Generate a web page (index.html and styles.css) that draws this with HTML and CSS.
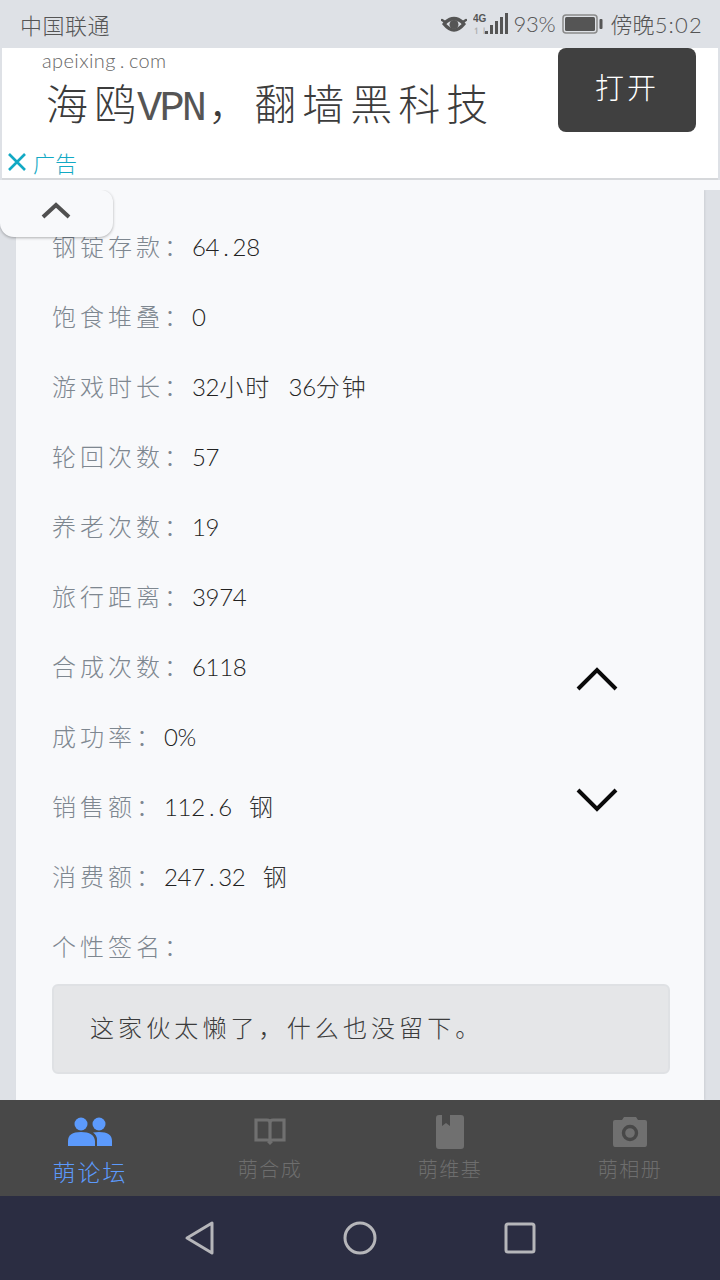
FILE: index.html
```html
<!DOCTYPE html>
<html lang="zh-CN">
<head>
<meta charset="utf-8">
<title>个人资料</title>
<link rel="stylesheet" href="styles.css">
</head>
<body>
<div class="page">
  <header class="status">
    <span class="carrier">中国联通</span>
    <div class="status-right">
      <svg class="eye" viewBox="0 0 26 20" width="26" height="20"><path d="M1 6 L4 8 Q13 0 22 8 L25 6 M4 8 Q3 9 2.500 10 Q13 23 23.500 10 Q23 9 22 8" fill="none" stroke="#555" stroke-width="2.400" stroke-linecap="round"/><path d="M4 10 Q13 1 22 10 Q13 21 4 10Z" fill="none" stroke="#555" stroke-width="2"/><circle cx="13" cy="10.500" r="4.500" fill="#555"/></svg>
      <svg class="signal" viewBox="0 0 36 24" width="36" height="24"><text x="0" y="10" class="sig-4g">4G</text><text x="0" y="22" class="sig-arrows">↿⇂</text><rect x="12" y="19" width="3" height="3" fill="#555"/><rect x="17" y="13" width="3" height="9" fill="#555"/><rect x="22" y="9" width="3" height="13" fill="#555"/><rect x="27" y="5" width="3" height="17" fill="#555"/><rect x="32" y="1" width="3" height="21" fill="#555"/></svg>
      <span class="pct">93%</span>
      <svg class="battery" viewBox="0 0 41 20" width="41" height="20"><rect x="1" y="1" width="34" height="18" rx="3" fill="none" stroke="#8a8a8a" stroke-width="1.500"/><rect x="3" y="3" width="30" height="14" rx="1.500" fill="#555"/><rect x="37.500" y="5" width="3" height="10" rx="1" fill="#555"/></svg>
      <span class="clock">傍晚<span class="clock-num">5:02</span></span>
    </div>
  </header>

  <section class="ad">
    <div class="ad-main">
      <div class="ad-site">apeixing<span class="ad-dot">.</span>com</div>
      <div class="ad-title">海鸥<span class="ad-latin">VPN</span><span class="ad-comma">，</span>翻墙黑科技</div>
    </div>
    <div class="ad-btn">打开</div>
    <div class="ad-mark">
      <svg viewBox="0 0 20 20" width="20" height="20"><path d="M2 2 L18 18 M18 2 L2 18" stroke="#12a9c4" stroke-width="2.600" fill="none"/></svg>
      <span>广告</span>
    </div>
  </section>
  <div class="ad-gap"></div>

  <main class="content">
    <div class="collapse">
      <svg viewBox="0 0 32 20" width="32" height="20"><path d="M3 17 L16 5 L29 17" fill="none" stroke="#505050" stroke-width="4"/></svg>
    </div>
    <div class="card">
      <div class="row"><span class="k">钢锭存款：</span><span class="v"><span class="n">64<span class="dot">.</span>28</span></span></div>
      <div class="row"><span class="k">饱食堆叠：</span><span class="v"><span class="n">0</span></span></div>
      <div class="row"><span class="k">游戏时长：</span><span class="v"><span class="n">32</span>小时 <span class="n">36</span>分钟</span></div>
      <div class="row"><span class="k">轮回次数：</span><span class="v"><span class="n">57</span></span></div>
      <div class="row"><span class="k">养老次数：</span><span class="v"><span class="n">19</span></span></div>
      <div class="row"><span class="k">旅行距离：</span><span class="v"><span class="n">3974</span></span></div>
      <div class="row"><span class="k">合成次数：</span><span class="v"><span class="n">6118</span></span></div>
      <div class="row"><span class="k">成功率：</span><span class="v"><span class="n">0%</span></span></div>
      <div class="row"><span class="k">销售额：</span><span class="v"><span class="n">112<span class="dot">.</span>6</span> 钢</span></div>
      <div class="row"><span class="k">消费额：</span><span class="v"><span class="n">247<span class="dot">.</span>32</span> 钢</span></div>
      <div class="row"><span class="k">个性签名：</span></div>
      <div class="sig">这家伙太懒了，什么也没留下。</div>
    </div>
    <svg class="scroll scroll-up" viewBox="0 0 44 26" width="44" height="26"><path d="M3 22 L22 3 L41 22" fill="none" stroke="#0a0a0a" stroke-width="4"/></svg>
    <svg class="scroll scroll-down" viewBox="0 0 44 26" width="44" height="26"><path d="M3 4 L22 23 L41 4" fill="none" stroke="#0a0a0a" stroke-width="4"/></svg>
  </main>

  <nav class="tabs">
    <div class="tab active">
      <svg viewBox="0 0 46 30" width="46" height="30"><circle cx="14" cy="7" r="6.500" fill="#5c9afc"/><circle cx="32" cy="7" r="6.500" fill="#5c9afc"/><path d="M1 29 V24 Q1 15 14 15 Q27 15 28 24 V29Z" fill="#5c9afc"/><path d="M26 15.500 Q29 15 32 15 Q45 15 45 24 V29 H30 V23 Q30 18 26 15.500Z" fill="#5c9afc"/></svg>
      <span>萌论坛</span>
    </div>
    <div class="tab">
      <svg viewBox="0 0 32 30" width="32" height="30"><path d="M2 3 H13 Q16 3 16 6 V25 Q16 23 13 23 H2Z M30 3 H19 Q16 3 16 6 V25 Q16 23 19 23 H30Z" fill="none" stroke="#707070" stroke-width="3.200"/><path d="M13 25 H19 L16 28Z" fill="#707070"/></svg>
      <span>萌合成</span>
    </div>
    <div class="tab">
      <svg viewBox="0 0 28 34" width="28" height="34"><path d="M3 0 H6 V11 L10 8 L14 11 V0 H25 Q28 0 28 3 V31 Q28 34 25 34 H3 Q0 34 0 31 V3 Q0 0 3 0Z" fill="#707070"/></svg>
      <span>萌维基</span>
    </div>
    <div class="tab">
      <svg viewBox="0 0 36 32" width="36" height="32"><path d="M3 4 H10 L12 1 H24 L26 4 H33 Q35 4 35 6 V28 Q35 31 33 31 H3 Q1 31 1 28 V6 Q1 4 3 4Z" fill="#707070"/><circle cx="18" cy="17" r="6.500" fill="none" stroke="#484848" stroke-width="3.400"/></svg>
      <span>萌相册</span>
    </div>
  </nav>

  <footer class="sysnav">
    <svg viewBox="0 0 32 36" width="32" height="36"><path d="M28 3 V33 L3 18Z" fill="none" stroke="#b6b6ba" stroke-width="3" stroke-linejoin="round"/></svg>
    <svg viewBox="0 0 34 34" width="34" height="34"><circle cx="17" cy="17" r="15" fill="none" stroke="#b6b6ba" stroke-width="3"/></svg>
    <svg viewBox="0 0 32 32" width="32" height="32"><rect x="2" y="2" width="28" height="28" rx="2" fill="none" stroke="#b6b6ba" stroke-width="3"/></svg>
  </footer>
</div>
</body>
</html>
```

FILE: styles.css
```css
* { box-sizing: border-box; }
html, body { margin: 0; padding: 0; }
body {
  font-family: "Noto Sans CJK SC", "Noto Sans", sans-serif;
  font-weight: 300;
  background: #dee1e6;
}
.page {
  width: 720px;
  height: 1280px;
  display: flex;
  flex-direction: column;
  overflow: hidden;
  background: #dee1e6;
}

/* status bar */
.status {
  height: 48px;
  flex: none;
  display: flex;
  align-items: center;
  justify-content: space-between;
  padding: 0 17px 0 20px;
  color: #555;
  background: #dee1e6;
}
.carrier { font-size: 22px; letter-spacing: 0.5px; line-height: 1; }
.status-right { display: flex; align-items: center; }
.eye { margin-right: 6px; }
.signal { margin-right: 5px; }
.sig-4g { font: 700 10px "Liberation Sans", sans-serif; fill: #555; }
.sig-arrows { font: 700 9px "DejaVu Sans", sans-serif; fill: #b0b0b0; }
.pct { font: 300 22px/1 "Lato", sans-serif; margin-right: 8px; width: 40px; white-space: nowrap; letter-spacing: -0.300px; }
.battery { margin-right: 8px; }
.clock { font-size: 22px; line-height: 1; white-space: nowrap; }
.clock-num { font-family: "Lato", sans-serif; letter-spacing: 1.200px; }

/* ad */
.ad {
  height: 132px;
  flex: none;
  margin: 0 2px;
  background: #fff;
  border-bottom: 2px solid #d6d8db;
  display: grid;
  grid-template-columns: 1fr 138px;
  grid-template-rows: 84px 1fr;
  column-gap: 22px;
  padding-right: 22px;
}
.ad-main { padding-left: 40px; }
.ad-site {
  font: 300 20px/24px "Lato", sans-serif;
  color: #666;
  letter-spacing: 0.400px;
}
.ad-dot { padding: 0 4px; }
.ad-title {
  font-size: 42px;
  line-height: 60px;
  letter-spacing: 6px;
  padding-left: 4px;
  color: #3c3c3c;
  white-space: nowrap;
}
.ad-latin {
  font-family: "Liberation Mono", monospace;
  font-size: 42px;
  font-weight: 400;
  letter-spacing: -2.800px;
  color: #555;
  margin-left: -5px;
}
.ad-comma { letter-spacing: 0; margin: 0 4px; }
.ad-btn {
  background: #404040;
  border-radius: 8px;
  color: #fff;
  font-size: 29px;
  letter-spacing: 3px;
  display: flex;
  align-items: center;
  justify-content: center;
  padding-bottom: 8px;
}
.ad-mark {
  grid-column: 1;
  display: flex;
  align-items: center;
  gap: 6px;
  padding: 14px 0 0 5px;
  color: #12a9c4;
  font-size: 22px;
  line-height: 1;
}
.ad-gap { height: 10px; flex: none; background: #f8f9fb; }

/* content */
.content {
  position: relative;
  flex: 1;
  min-height: 0;
  overflow: hidden;
}
.card {
  margin: 0 16px;
  height: 100%;
  padding: 20px 34px 0 36px;
  background: #f8f9fb;
  box-shadow: 1px 0 2px rgba(0, 0, 0, 0.08);
}
.row {
  height: 70px;
  display: flex;
  align-items: center;
  font-size: 24px;
  white-space: nowrap;
}
.k { color: #7e8790; letter-spacing: 4px; }
.v { color: #333; letter-spacing: 2px; word-spacing: 10px; }
.n { font-family: "Lato", sans-serif; font-size: 24px; letter-spacing: -0.300px; color: #222; }
.dot { padding: 0 4px; }
.sig {
  margin-top: 4px;
  height: 90px;
  display: flex;
  align-items: center;
  padding: 0 0 6px 36px;
  font-size: 24px;
  letter-spacing: 4.100px;
  color: #3c3c3c;
  background: #e5e6e8;
  border: 2px solid #dfe1e4;
  border-radius: 6px;
}
.collapse {
  position: absolute;
  left: 0;
  top: 0;
  width: 113px;
  height: 47px;
  z-index: 2;
  display: flex;
  align-items: center;
  justify-content: center;
  padding: 0 2px 8px 0;
  background: #f8f9fb;
  border-radius: 0 12px 14px 14px;
  box-shadow: 0 1px 3px rgba(0, 0, 0, 0.3);
}
.scroll { position: absolute; left: 575px; }
.scroll-up { top: 477px; }
.scroll-down { top: 596px; }

/* tabs */
.tabs {
  height: 96px;
  flex: none;
  display: grid;
  grid-template-columns: repeat(4, 1fr);
  background: #484848;
}
.tab {
  display: flex;
  flex-direction: column;
  align-items: center;
  justify-content: flex-start;
  padding-top: 15px;
  color: #6e6e6e;
  font-size: 20px;
  letter-spacing: 1.500px;
  line-height: 26px;
}
.tab svg { height: 34px; display: block; }
.tab span { margin-top: 7px; }
.tab.active { color: #5c9afc; font-size: 23px; letter-spacing: 2px; }
.tab.active span { margin-top: 9px; }

/* system navigation */
.sysnav {
  height: 84px;
  flex: none;
  background: #2b2d42;
  display: grid;
  grid-template-columns: repeat(3, 160px);
  justify-content: center;
  align-items: center;
  justify-items: center;
}
```
